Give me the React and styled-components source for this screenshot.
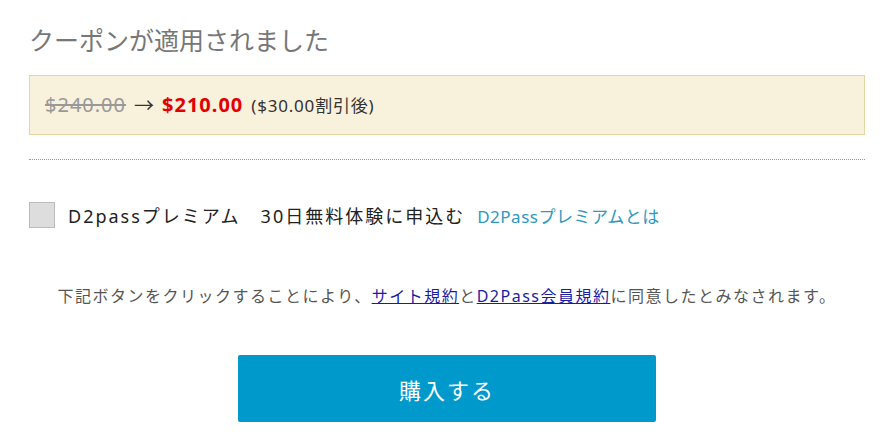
import React from 'react';
import styled, { createGlobalStyle } from 'styled-components';

const GlobalStyle = createGlobalStyle`
  body {
    margin: 0;
    background: #fff;
    font-family: "Noto Sans", "Noto Sans CJK JP", sans-serif;
  }
`;

const Page = styled.div`
  width: 836px;
  padding: 23px 0 0 29px;
`;

const Title = styled.h2`
  margin: 0;
  font-size: 25px;
  font-weight: 400;
  color: #777;
  line-height: 34px;
`;

const PriceBox = styled.div`
  margin-top: 18px;
  height: 57px;
  display: flex;
  align-items: center;
  padding: 0 15px 1px;
  background: #f8f1dc;
  border: 1px solid #e3d6a2;
  font-size: 20px;
  color: #333;
  gap: 8px;
`;

const OldPrice = styled.span`
  color: #999;
  text-decoration: line-through;
  letter-spacing: 1px;
`;

const NewPrice = styled.span`
  color: #e30000;
  font-weight: 700;
  letter-spacing: 1px;
`;

const Discount = styled.span`
  font-size: 17px;
  letter-spacing: 0.8px;
`;

const Divider = styled.hr`
  margin: 24px 0 0;
  border: 0;
  border-top: 1px dotted #999;
`;

const OptionRow = styled.label`
  margin-top: 42px;
  display: flex;
  align-items: center;
  height: 26px;
  font-size: 18px;
  color: #222;
  letter-spacing: 2px;
`;

const Box = styled.span`
  width: 24px;
  height: 24px;
  background: #ddd;
  border: 1px solid #bbb;
  margin-right: 13px;
  flex-shrink: 0;
`;

const InfoLink = styled.a`
  margin-left: 12px;
  color: #2e98c0;
  text-decoration: none;
  font-size: 17px;
  letter-spacing: 0.5px;
`;

const Notice = styled.p`
  margin: 56px 0 0;
  text-align: center;
  font-size: 16px;
  color: #555;
  letter-spacing: 1.5px;
  line-height: 24px;
`;

const TermsLink = styled.a`
  color: #1c1ca3;
  text-decoration: underline;
`;

const BuyButton = styled.button`
  display: block;
  margin: 47px auto 0;
  width: 418px;
  height: 67px;
  border: 0;
  border-radius: 2px;
  background: #0099cc;
  color: #fff;
  font-family: inherit;
  font-size: 22px;
  letter-spacing: 2px;
  box-shadow: 0 10px 0 -6px #aebac4;
  cursor: pointer;
`;

export default function App() {
  return (
    <Page>
      <GlobalStyle />
      <Title>クーポンが適用されました</Title>
      <PriceBox>
        <OldPrice>$240.00</OldPrice>
        <span>→</span>
        <NewPrice>$210.00</NewPrice>
        <Discount>($30.00割引後)</Discount>
      </PriceBox>
      <Divider />
      <OptionRow>
        <Box />
        D2passプレミアム　30日無料体験に申込む
        <InfoLink href="#">D2Passプレミアムとは</InfoLink>
      </OptionRow>
      <Notice>
        下記ボタンをクリックすることにより、<TermsLink href="#">サイト規約</TermsLink>と
        <TermsLink href="#">D2Pass会員規約</TermsLink>に同意したとみなされます。
      </Notice>
      <BuyButton>購入する</BuyButton>
    </Page>
  );
}
